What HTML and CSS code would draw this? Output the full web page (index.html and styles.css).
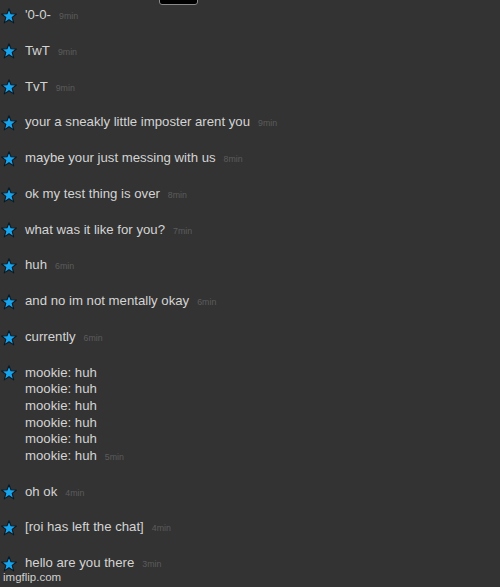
FILE: index.html
```html
<!DOCTYPE html>
<html lang="en">
<head>
  <meta charset="UTF-8">
  <title>Chat</title>
  <link rel="stylesheet" href="styles.css">
</head>
<body>

  <div class="tab"></div>

  <div id="chat"></div>

  <div class="marca">imgflip.com</div>

  <script>
    const chat = document.getElementById('chat');

    const mensajes = [
      { texto: ["'0-0-"], hace: '9min' },
      { texto: ['TwT'], hace: '9min' },
      { texto: ['TvT'], hace: '9min' },
      { texto: ['your a sneakly little imposter arent you'], hace: '9min' },
      { texto: ['maybe your just messing with us'], hace: '8min' },
      { texto: ['ok my test thing is over'], hace: '8min' },
      { texto: ['what was it like for you?'], hace: '7min' },
      { texto: ['huh'], hace: '6min' },
      { texto: ['and no im not mentally okay'], hace: '6min' },
      { texto: ['currently'], hace: '6min' },
      { texto: ['mookie: huh', 'mookie: huh', 'mookie: huh', 'mookie: huh', 'mookie: huh', 'mookie: huh'], hace: '5min' },
      { texto: ['oh ok'], hace: '4min' },
      { texto: ['[roi has left the chat]'], hace: '4min' },
      { texto: ['hello are you there'], hace: '3min' }
    ];

    const estrella = `<svg class="estrella" viewBox="0 0 16 16" width="16" height="16">
      <path d="M8 0.8 L10 5.8 L15.4 6 L11.2 9.4 L12.7 14.9 L8 11.8 L3.3 14.9 L4.8 9.4 L0.6 6 L6 5.8 Z"
        fill="#18a4ec" stroke="#0a1822" stroke-width="1.1" stroke-linejoin="round"/>
    </svg>`;

    mensajes.forEach(msg => {
      const div = document.createElement('div');
      div.classList.add('mensaje');
      const lineas = msg.texto.map((t, i) => {
        const hora = i === msg.texto.length - 1 ? `<span class="hace">${msg.hace}</span>` : '';
        return `<p>${t}${hora}</p>`;
      }).join('');
      div.innerHTML = estrella + `<div class="texto">${lineas}</div>`;
      chat.appendChild(div);
    });
  </script>

</body>
</html>
```

FILE: styles.css
```css
body {
  margin: 0;
  background: #333333;
  font-family: "Liberation Sans", Arial, sans-serif;
  color: #d4d4d4;
  height: 587px;
  overflow: hidden;
}

.tab {
  position: absolute;
  top: -4px;
  left: 159px;
  width: 37px;
  height: 7px;
  background: #000;
  border: 1px solid #8a8a8a;
  border-radius: 3px;
}

#chat {
  padding-top: 7px;
}

.mensaje {
  display: flex;
  align-items: flex-start;
  margin-bottom: 19.2px;
}

.estrella {
  flex: none;
  margin: 0.6px 8px 0 1px;
}

.texto p {
  margin: 0;
  font-size: 13.2px;
  line-height: 16.6px;
}

.hace {
  font-size: 8.8px;
  line-height: 8px;
  color: #5c5c5c;
  margin-left: 8px;
}

.marca {
  position: absolute;
  left: 3px;
  top: 571px;
  font-size: 11.5px;
  color: #cfcfcf;
}
```
